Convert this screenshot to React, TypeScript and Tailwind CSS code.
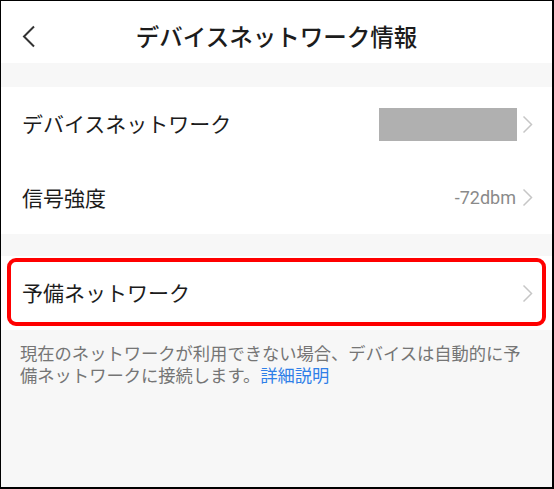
import React from 'react';

const FONT = '"Noto Sans CJK JP", "Noto Sans", sans-serif';

const Chevron = () => (
  <svg width="11" height="19" viewBox="0 0 11 19" className="flex-shrink-0">
    <polyline points="1.5,1.5 9.5,9.5 1.5,17.5" fill="none" stroke="#c6c6c6" strokeWidth="1.5" />
  </svg>
);

export default function App() {
  return (
    <div
      className="w-[554px] h-[489px] flex flex-col bg-[#f7f7f7] border-t border-l border-r-2 border-b-2 border-black overflow-hidden"
      style={{ fontFamily: FONT }}
    >
      {/* Header */}
      <div className="relative h-[62px] flex items-center justify-center bg-white pt-[10px]">
        <svg
          width="14"
          height="24"
          viewBox="0 0 14 24"
          className="absolute left-[21px] top-[24px]"
        >
          <polyline points="12,1.5 2,11.5 12,21.5" fill="none" stroke="#333" strokeWidth="2" />
        </svg>
        <h1 className="text-[23.5px] font-medium text-[#1c1c1c]">
          デバイスネットワーク情報
        </h1>
      </div>

      <div className="h-[24px]" />

      {/* Network info */}
      <div className="bg-white">
        <div className="h-[74px] flex items-center pl-[21px] pr-[19px]">
          <span className="flex-1 text-[21px] text-[#1c1c1c]">デバイスネットワーク</span>
          <div className="w-[138px] h-[33px] bg-[#b0b0b0] mr-[5px]" />
          <Chevron />
        </div>
        <div className="h-[73px] flex items-center pl-[21px] pr-[19px]">
          <span className="flex-1 text-[21px] text-[#1c1c1c]">信号強度</span>
          <span className="text-[18px] text-[#8a8a8a] mr-[6px]" style={{ fontFamily: 'Roboto, sans-serif' }}>
            -72dbm
          </span>
          <Chevron />
        </div>
      </div>

      <div className="h-[22px]" />

      {/* Backup network */}
      <div className="relative bg-white h-[74px] flex items-center pl-[21px] pr-[19px]">
        <span className="flex-1 text-[21px] text-[#1c1c1c]">予備ネットワーク</span>
        <Chevron />
        <div className="absolute left-[6px] right-[6px] top-[2px] bottom-[4px] border-4 border-[#ff0000] rounded-[9px]" />
      </div>

      <p className="pl-[19px] pr-[25px] pt-[12px] text-[17.3px] leading-[22px] text-[#757575]">
        現在のネットワークが利用できない場合、デバイスは自動的に予備ネットワークに接続します。<span className="text-[#2f7fe8]">詳細説明</span>
      </p>
    </div>
  );
}
